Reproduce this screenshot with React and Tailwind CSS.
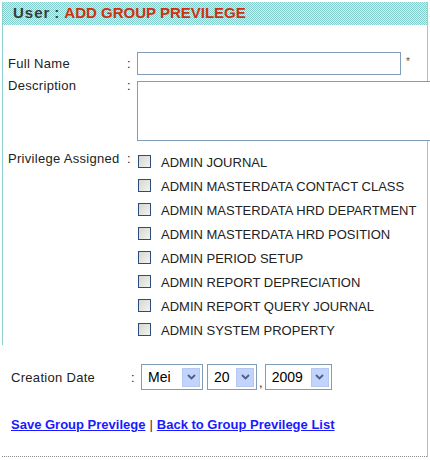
import React from "react";

const items = [
  "ADMIN JOURNAL",
  "ADMIN MASTERDATA CONTACT CLASS",
  "ADMIN MASTERDATA HRD DEPARTMENT",
  "ADMIN MASTERDATA HRD POSITION",
  "ADMIN PERIOD SETUP",
  "ADMIN REPORT DEPRECIATION",
  "ADMIN REPORT QUERY JOURNAL",
  "ADMIN SYSTEM PROPERTY",
];

function Chevron() {
  return (
    <svg width="9" height="6" viewBox="0 0 9 6">
      <path d="M1 1 L4.5 4.5 L8 1" fill="none" stroke="#4b5f86" strokeWidth="1.8" />
    </svg>
  );
}

function Select({ value, width }) {
  return (
    <div
      className="flex h-[26px] items-center border border-[#7f9db9] bg-white p-[2px]"
      style={{ width }}
    >
      <span className="flex-1 pl-[4px] text-[14px] leading-none text-black">{value}</span>
      <span className="flex h-[19px] w-[18px] items-center justify-center border border-[#b6c8f2] bg-[#c2d3fc]">
        <Chevron />
      </span>
    </div>
  );
}

function Checkbox() {
  return (
    <span className="block h-[13px] w-[13px] border border-[#2a4f7e] bg-[linear-gradient(135deg,#d6d6ce,#f4f4f0)]" />
  );
}

export default function App() {
  return (
    <div className="h-[460px] w-[430px] overflow-hidden bg-white pl-[2px] pt-[2px] font-['Liberation_Sans',Arial,sans-serif] text-[#222]">
      <div className="flex h-[455px] w-[426px] flex-col border-r border-[#bdbdbd]">
        <div className="border-l border-[#8fcfcf] pb-[4px]">
          <div className="flex h-[23px] items-center bg-[conic-gradient(#84cdcd_25%,#d4efef_0_50%,#84cdcd_0_75%,#d4efef_0)] bg-[length:2px_2px] pl-[10px] text-[15px] font-bold">
            <span className="tracking-[1px] text-[#3a3a3a]">User</span>
            <span className="ml-[4px] text-[#3a3a3a]">:</span>
            <span className="ml-[5px] text-[#d2300c]">ADD GROUP PREVILEGE</span>
          </div>

          <div className="pl-[5px] pt-[27px] text-[13px] leading-[15px]">
            <div className="flex h-[23px] items-center">
              <div className="w-[119px] shrink-0 tracking-[0.3px]">Full Name</div>
              <div className="w-[10px] shrink-0">:</div>
              <div className="h-[23px] w-[264px] shrink-0 border border-[#7f9db9] bg-white" />
              <span className="ml-[5px] -mt-[5px] text-[10px] text-[#555]">*</span>
            </div>

            <div className="mt-[6px] flex items-start">
              <div className="-mt-[3px] w-[119px] shrink-0 tracking-[0.3px]">Description</div>
              <div className="-mt-[3px] w-[10px] shrink-0">:</div>
              <div className="h-[60px] w-[300px] shrink-0 border border-[#7f9db9] bg-white" />
            </div>

            <div className="mt-[8px] flex items-start">
              <div className="w-[119px] shrink-0 pt-[2px] tracking-[0.3px]">Privilege Assigned</div>
              <div className="w-[10px] shrink-0 pt-[2px]">:</div>
              <div className="flex flex-col">
                {items.map((it) => (
                  <div key={it} className="flex h-[24px] items-center pl-[1px]">
                    <Checkbox />
                    <span className="ml-[10px] mt-[3px] text-[13px] text-[#222]">{it}</span>
                  </div>
                ))}
              </div>
            </div>
          </div>
        </div>

        <div className="pl-[9px] pt-[19px] text-[13px] leading-[15px]">
          <div className="flex h-[26px] items-center">
            <div className="w-[120px] shrink-0 tracking-[0.3px]">Creation Date</div>
            <div className="w-[10px] shrink-0">:</div>
            <Select value="Mei" width="62px" />
            <div className="ml-[4px]">
              <Select value="20" width="50px" />
            </div>
            <span className="mx-[2px] mt-[10px]">,</span>
            <Select value="2009" width="67px" />
          </div>

          <div className="mt-[27px] flex items-center text-[13px] font-bold">
            <a href="#" className="text-[#1a1aff] underline">Save Group Previlege</a>
            <span className="mx-[4px] font-normal text-[#333]">|</span>
            <a href="#" className="text-[#1a1aff] underline">Back to Group Previlege List</a>
          </div>
        </div>

        <div className="mt-auto border-t border-dotted border-[#8a8a8a]" />
      </div>
    </div>
  );
}
